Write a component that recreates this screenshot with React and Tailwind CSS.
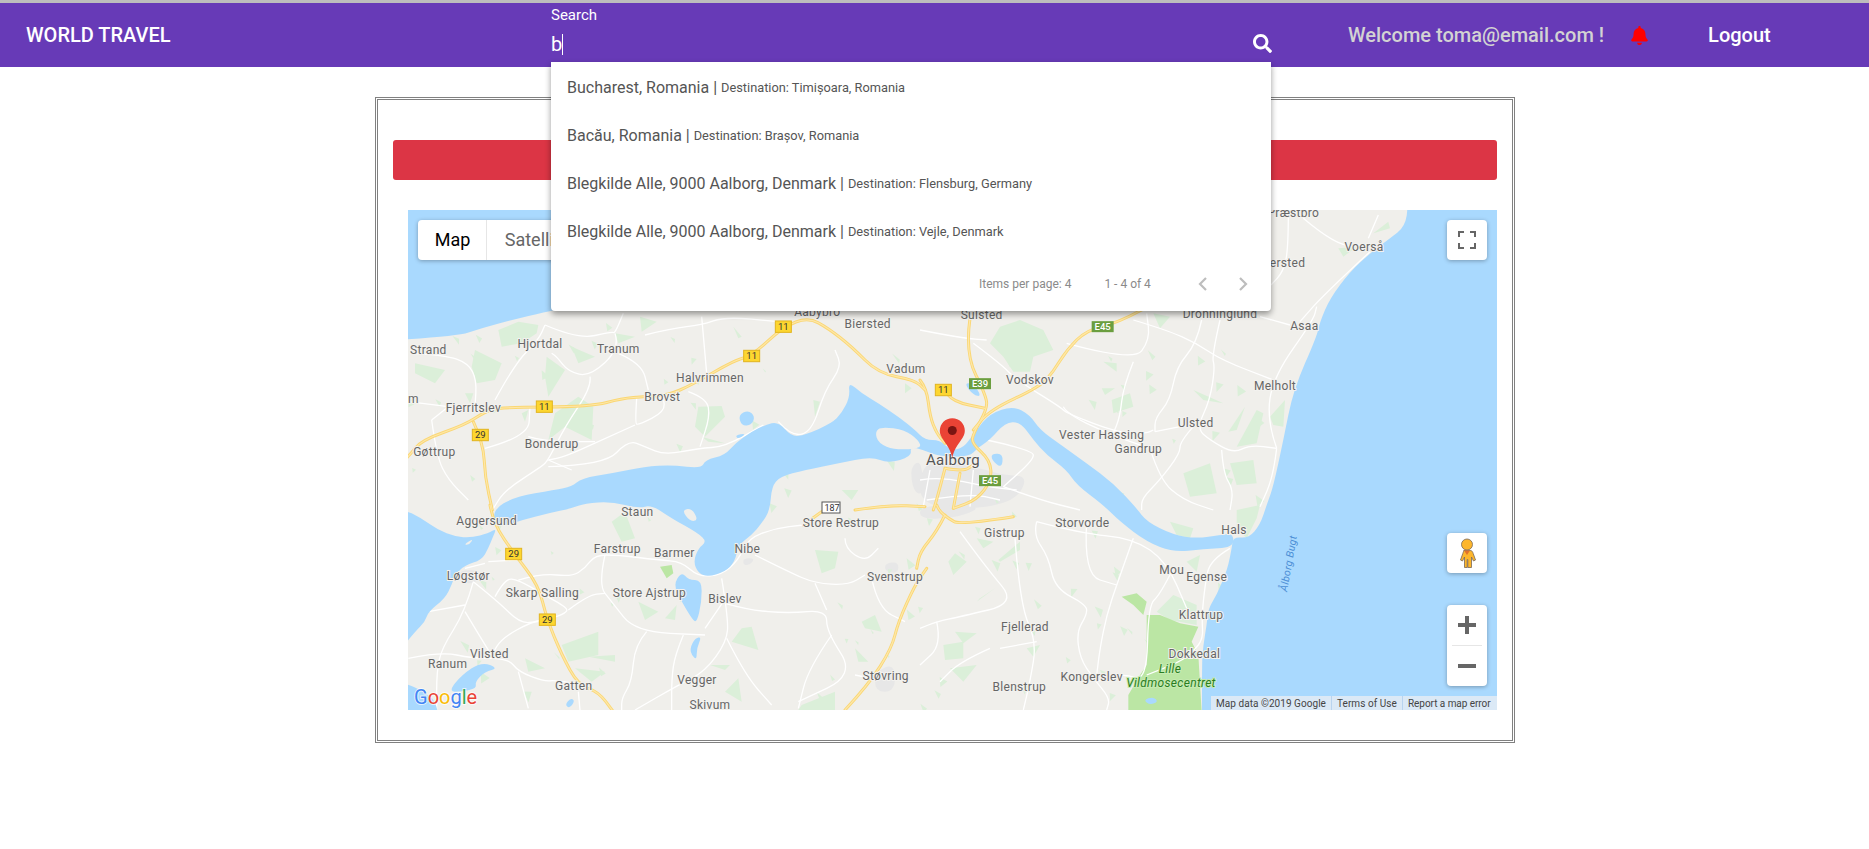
import { FaBell, FaSearch } from 'react-icons/fa';

// zoom crop coords -> page coords, the map svg uses page coords as viewBox
const left = (x, y, top) => [405 + x / 3, top + y / 3];
const right = (x, y, top) => [920 + x / 3, top + y / 3];
const Z6 = (pts) => pts.map(([x, y]) => left(x, y, 300));
const Z7 = (pts) => pts.map(([x, y]) => left(x, y, 505));
const Z8 = (pts) => pts.map(([x, y]) => right(x, y, 300));
const Z9 = (pts) => pts.map(([x, y]) => right(x, y, 505));
const Z10 = (pts) => pts.map(([x, y]) => [1260 + x / 3, 205 + y / 3]);

function curve(pts, closed) {
  if (closed) {
    const mid = (a, b) => [(a[0] + b[0]) / 2, (a[1] + b[1]) / 2];
    const start = mid(pts[pts.length - 1], pts[0]);
    let d = `M${start[0]} ${start[1]}`;
    pts.forEach((p, i) => {
      const m = mid(p, pts[(i + 1) % pts.length]);
      d += `Q${p[0]} ${p[1]} ${m[0]} ${m[1]}`;
    });
    return d + 'Z';
  }
  let d = `M${pts[0][0]} ${pts[0][1]}`;
  for (let i = 1; i < pts.length - 1; i++) {
    const mx = (pts[i][0] + pts[i + 1][0]) / 2;
    const my = (pts[i][1] + pts[i + 1][1]) / 2;
    d += `Q${pts[i][0]} ${pts[i][1]} ${mx} ${my}`;
  }
  const last = pts[pts.length - 1];
  return d + `L${last[0]} ${last[1]}`;
}

const sharp = (pts) => 'M' + pts.map((p) => p.join(' ')).join('L') + 'Z';

const water = [
  [[300, 100], [600, 100], [600, 300], [565, 308], [545, 312], [512, 320], [482, 328], [455, 337], [300, 345]],
  // sea, from Voerså down to the bottom edge
  [...Z10([[445, 0], [435, 65], [390, 100], [330, 145], [270, 200], [210, 280], [180, 350]]),
    ...Z8([[1190, 110], [1120, 270], [1090, 420], [1060, 560]]),
    ...Z9([[1040, 0], [1020, 60], [985, 100], [940, 95], [935, 130], [925, 180], [915, 210], [890, 270], [865, 310], [860, 360], [850, 420], [845, 480], [848, 1000]]),
    [1800, 900], [1800, 50], [1411, 50]],
  // west water at Aggersund
  Z7([[-300, -20], [-10, 10], [50, 40], [100, 75], [150, 95], [200, 98], [250, 85], [275, 70], [262, 100], [250, 130], [230, 165], [180, 180], [150, 210], [140, 240], [120, 280], [70, 320], [60, 350], [30, 380], [-10, 430], [-300, 500]]),
  Z7([[-200, 510], [-10, 530], [60, 560], [100, 600], [100, 700], [-200, 700]]),
  // Limfjord
  [...Z6([[262, 630], [330, 590], [450, 570], [500, 560], [530, 535], [620, 520], [720, 500], [800, 495], [890, 505], [900, 480], [960, 465], [990, 430], [1040, 395], [1080, 375], [1120, 365], [1160, 410], [1200, 405], [1280, 370], [1310, 340], [1335, 290], [1330, 245], [1370, 280], [1420, 310], [1480, 350], [1530, 390], [1560, 420]]),
    ...Z8([[60, 420], [90, 450], [130, 445], [165, 395], [210, 340], [280, 318], [330, 345], [360, 390], [430, 440], [500, 490], [580, 550], [650, 625]]),
    ...Z9([[680, 50], [760, 90], [830, 100], [900, 90], [940, 85], [940, 128], [850, 132], [760, 142], [680, 110], [600, 50], [550, 0]]),
    ...Z8([[470, 555], [440, 510], [380, 465], [340, 420], [300, 365], [255, 368], [210, 420], [170, 445], [150, 470], [60, 470], [10, 450], [-30, 440]]),
    ...Z6([[1520, 470], [1450, 490], [1400, 470], [1300, 490], [1200, 510], [1125, 530], [1100, 560], [1095, 630]]),
    ...Z7([[1070, 55], [1040, 90], [1000, 120], [990, 170], [960, 200], [910, 215], [880, 205], [865, 170], [880, 130], [905, 110], [880, 85], [800, 40], [740, 0]]),
    ...Z6([[700, 625], [620, 605], [540, 610], [500, 625]]),
    ...Z7([[430, 25], [350, 45], [275, 70]])],
  Z6([[1000, 345], [1030, 330], [1050, 350], [1040, 375], [1010, 378]]),
  Z6([[990, 405], [1025, 400], [1000, 418]]),
  Z7([[805, 240], [830, 200], [850, 225], [890, 225], [890, 290], [875, 355], [860, 340], [830, 290]]),
  Z7([[855, 430], [870, 400], [890, 395], [875, 430], [875, 465], [860, 450]]),
  Z7([[130, 560], [170, 510], [230, 470], [280, 490], [240, 500], [210, 530], [215, 550], [170, 560]]),
  Z7([[480, 600], [495, 580], [510, 585], [495, 610]]),
  Z8([[215, 460], [250, 462], [245, 505], [215, 480]]),
  Z8([[132, 250], [160, 250], [185, 290], [160, 285]]),
  Z9([[670, 585], [700, 575], [715, 590], [690, 600]]),
];

const islands = [
  Z6([[1410, 395], [1430, 380], [1500, 390], [1540, 420], [1550, 445], [1470, 450], [1420, 430]]),
  Z7([[830, 15], [860, 10], [880, 45], [855, 50]]),
  Z7([[175, 120], [205, 100], [195, 118]]),
];

const forest = [
  Z6([[280, 90], [340, 65], [400, 75], [395, 100], [350, 130], [290, 140]]),
  Z6([[210, 150], [290, 190], [270, 240], [215, 250], [200, 200]]),
  Z6([[425, 170], [480, 210], [430, 290], [420, 230]]),
  Z6([[430, 420], [450, 340], [520, 290], [565, 320], [560, 420], [480, 380]]),
  Z6([[705, 50], [755, 65], [710, 95]]),
  Z6([[880, 320], [950, 318], [960, 350], [900, 410], [870, 380]]),
  Z6([[890, 410], [960, 430], [910, 425]]),
  Z6([[30, 190], [120, 210], [90, 250], [30, 220]]),
  Z6([[630, 100], [690, 110], [640, 130]]),
  Z6([[1225, 300], [1245, 305], [1230, 350]]),
  Z6([[500, 140], [570, 170], [520, 190]]),
  Z6([[350, 340], [370, 330], [360, 365]]),
  Z6([[1310, 570], [1360, 570], [1340, 600]]),
  Z6([[985, 80], [1010, 110], [1000, 115]]),
  Z6([[180, 280], [205, 280], [195, 310]]),
  Z6([[1500, 250], [1520, 265], [1500, 280]]),
  Z7([[620, 50], [660, 20], [690, 100], [650, 110]]),
  Z7([[470, 420], [580, 380], [580, 450], [490, 470]]),
  Z7([[360, 460], [420, 490], [370, 500]]),
  Z7([[1230, 135], [1300, 140], [1290, 190], [1250, 205]]),
  Z7([[1010, 370], [1040, 365], [1060, 435], [980, 410]]),
  Z7([[1370, 350], [1410, 330], [1430, 380], [1380, 370]]),
  Z7([[1350, 430], [1390, 470], [1360, 470]]),
  Z7([[1190, 600], [1290, 560], [1290, 615], [1180, 615]]),
  Z7([[550, 455], [630, 450], [630, 470]]),
  Z7([[510, 490], [600, 500], [560, 530]]),
  Z7([[700, 290], [760, 320], [720, 345]]),
  Z7([[780, 340], [815, 300], [810, 345]]),
  Z7([[915, 480], [975, 480], [960, 495]]),
  Z7([[960, 560], [1000, 520], [1010, 590]]),
  Z8([[240, 80], [300, 60], [370, 90], [400, 150], [340, 170], [330, 215], [280, 215], [250, 170], [210, 130]]),
  Z8([[550, 185], [590, 190], [590, 215]]),
  Z8([[575, 300], [630, 280], [640, 320], [580, 340]]),
  Z8([[790, 520], [870, 490], [890, 580], [810, 590]]),
  Z8([[930, 490], [1000, 480], [1010, 550], [950, 555]]),
  Z8([[950, 440], [1010, 330], [1030, 340], [1010, 430]]),
  Z8([[925, 395], [975, 320], [950, 390]]),
  Z8([[1050, 350], [1095, 300], [1090, 380], [1060, 375]]),
  Z8([[820, 270], [910, 310], [850, 300]]),
  Z8([[545, 265], [585, 265], [555, 285]]),
  Z8([[700, 40], [750, 50], [720, 85]]),
  Z9([[85, 170], [105, 145], [140, 170], [100, 210]]),
  Z9([[235, 165], [300, 110], [300, 135], [240, 170]]),
  Z9([[170, 100], [220, 110], [190, 130]]),
  Z9([[170, 290], [225, 250], [180, 280]]),
  Z9([[105, 380], [170, 385], [130, 415]]),
  Z9([[70, 420], [130, 410], [130, 460], [75, 465]]),
  Z9([[90, 490], [170, 480], [130, 530]]),
  Z9([[320, 430], [360, 420], [340, 455]]),
  Z9([[750, 50], [820, 70], [810, 100], [770, 90]]),
  Z9([[710, 320], [760, 270], [830, 300], [830, 360], [750, 345]]),
  Z9([[800, 170], [840, 150], [830, 200]]),
  Z9([[950, 15], [1020, 0], [1010, 40], [980, 100], [950, 70]]),
  Z10([[235, 130], [290, 125], [250, 155]]),
  Z10([[340, 85], [385, 50], [390, 70]]),
];

// farmland specks, water is painted over whatever lands in the sea
const specks = [];
let seed = 17;
const rnd = () => (seed = (seed * 16807) % 2147483647) / 2147483647;
for (let i = 0; i < 130; i++) {
  const x = 408 + rnd() * 860;
  const y = 300 + rnd() * 410;
  const s = 3 + rnd() * 6;
  specks.push([[x, y], [x + s, y + s * rnd()], [x + s * rnd(), y + s * 1.3]]);
}

const bright = [
  Z9([[680, 330], [720, 330], [780, 355], [835, 365], [815, 410], [835, 450], [845, 620], [625, 620], [625, 570], [660, 510], [680, 480]]),
  Z9([[605, 275], [650, 265], [680, 290], [670, 330], [640, 300]]),
  Z7([[765, 185], [800, 180], [805, 205], [785, 220]]),
];

const urban = [
  Z8([[0, 500], [70, 480], [200, 510], [250, 525], [330, 530], [270, 620], [0, 630]]),
  Z9([[0, 0], [190, 0], [130, 35], [0, 45]]),
  Z7([[1440, 175], [1480, 170], [1480, 205], [1440, 200]]),
  Z7([[1410, 500], [1470, 475], [1470, 560], [1410, 560]]),
  Z7([[1015, 160], [1050, 160], [1035, 180], [1015, 180]]),
  Z7([[160, 195], [230, 195], [215, 235], [170, 235]]),
  Z6([[1515, 500], [1550, 480], [1555, 585], [1525, 575]]),
];

const roads = [
  Z6([[20, 160], [120, 165], [190, 190], [215, 240], [210, 320]]),
  Z6([[10, 305], [130, 320]]),
  Z6([[270, 300], [330, 190], [400, 120], [420, 75]]),
  Z6([[420, 75], [520, 118], [620, 95], [630, 100], [655, 40]]),
  Z6([[630, 100], [645, 145], [555, 230], [490, 215], [455, 170], [440, 160]]),
  Z6([[555, 230], [560, 260], [480, 380], [430, 480], [410, 500], [300, 570], [262, 630]]),
  Z6([[640, 160], [710, 190], [730, 270]]),
  Z6([[720, 105], [800, 85], [890, 75], [960, 50], [1120, 65]]),
  Z6([[890, 50], [905, 220]]),
  Z6([[850, 275], [905, 295], [915, 350], [885, 440]]),
  Z6([[695, 295], [690, 370], [700, 375], [780, 335], [775, 290]]),
  Z6([[690, 375], [580, 425], [480, 470], [430, 480]]),
  Z6([[430, 480], [500, 510]]),
  Z6([[430, 500], [600, 495], [670, 420], [720, 440], [780, 465], [880, 445], [960, 440], [1075, 375]]),
  Z6([[240, 445], [370, 410], [375, 320]]),
  Z6([[370, 410], [420, 425], [570, 425]]),
  Z6([[1120, 365], [1160, 410], [1220, 395], [1260, 270], [1310, 200], [1290, 150]]),
  Z6([[80, 360], [130, 320]]),
  Z6([[80, 360], [95, 470], [130, 540], [190, 600]]),
  Z7([[250, 170], [340, 165]]),
  Z7([[180, 190], [240, 175]]),
  Z7([[205, 230], [280, 290], [345, 355], [400, 350]]),
  Z7([[340, 225], [410, 205], [500, 215], [540, 190], [570, 150], [640, 150], [760, 165], [830, 170], [880, 215], [950, 210], [1000, 165], [1030, 100], [1110, 70], [1195, 60]]),
  Z7([[600, 150], [580, 240], [620, 290], [690, 380], [900, 390]]),
  Z7([[270, 275], [300, 220], [340, 225], [410, 265], [490, 310], [480, 325], [440, 340], [380, 350], [290, 400], [260, 450]]),
  Z7([[490, 315], [550, 270], [600, 265]]),
  Z7([[205, 230], [180, 320], [110, 430], [95, 500], [95, 615]]),
  Z7([[180, 320], [240, 420], [260, 450]]),
  Z7([[70, 320], [180, 300]]),
  Z7([[10, 460], [110, 440], [200, 460], [310, 460], [340, 500], [420, 530], [450, 525], [560, 545]]),
  Z7([[340, 500], [370, 610]]),
  Z7([[520, 560], [525, 615]]),
  Z7([[725, 380], [690, 420], [680, 530], [650, 580], [650, 615]]),
  Z7([[835, 390], [810, 450], [800, 520], [800, 615]]),
  Z7([[950, 220], [970, 340], [965, 410], [900, 500], [820, 540], [690, 615]]),
  Z7([[900, 370], [955, 290]]),
  Z7([[965, 400], [1020, 510], [1100, 600]]),
  Z7([[960, 295], [1030, 315], [1150, 325], [1265, 315], [1265, 380], [1350, 510], [1180, 590]]),
  Z7([[1280, 390], [1210, 490], [1180, 610]]),
  Z7([[1050, 150], [1150, 200], [1230, 235], [1330, 240], [1380, 210]]),
  Z7([[1230, 235], [1265, 315]]),
  Z7([[1320, 100], [1320, 130], [1380, 170], [1420, 130]]),
  Z7([[1400, 220], [1420, 310], [1500, 350]]),
  Z7([[1350, 510], [1400, 520]]),
  Z8([[160, 130], [240, 190], [290, 240], [420, 320], [440, 340], [600, 400], [680, 400], [700, 390]]),
  Z8([[0, 90], [130, 115], [200, 120]]),
  Z8([[440, 130], [640, 185], [690, 120], [680, 40]]),
  Z8([[640, 185], [610, 260], [600, 350], [580, 400]]),
  Z8([[640, 60], [740, 90], [830, 130], [905, 180], [1060, 240]]),
  Z8([[845, 60], [830, 130], [770, 200], [750, 300], [705, 355], [705, 395]]),
  Z8([[900, 60], [875, 170], [885, 200], [870, 300], [830, 385], [870, 420], [940, 460], [990, 435], [1070, 445]]),
  Z8([[1070, 445], [1040, 360], [1060, 230], [1180, 60], [1190, 20]]),
  Z8([[705, 395], [780, 380]]),
  Z8([[1070, 445], [1060, 530], [1020, 620]]),
  Z8([[905, 450], [910, 520], [940, 570], [930, 630]]),
  Z8([[820, 380], [780, 425], [780, 460], [720, 540], [665, 595], [665, 630]]),
  Z8([[690, 445], [720, 540], [790, 600], [880, 630]]),
  Z8([[430, 320], [440, 340], [560, 400], [690, 445]]),
  Z8([[200, 420], [340, 450], [340, 480], [250, 560]]),
  Z8([[250, 560], [360, 600], [480, 630]]),
  // Aalborg streets
  Z8([[0, 540], [60, 530], [200, 560], [290, 570]]),
  Z8([[20, 600], [150, 580], [240, 600]]),
  Z8([[30, 510], [10, 620]]),
  Z8([[160, 510], [150, 620]]),
  Z9([[500, 50], [490, 210], [590, 240]]),
  Z9([[350, 50], [340, 90], [385, 155], [405, 250], [500, 300], [500, 330], [470, 380], [480, 460], [520, 520], [570, 580], [560, 615]]),
  Z9([[640, 100], [590, 240], [560, 330], [540, 430], [530, 510]]),
  Z9([[350, 50], [480, 85], [640, 100], [740, 170], [800, 310]]),
  Z9([[285, 100], [300, 300], [350, 410], [330, 530], [310, 615]]),
  Z9([[120, 80], [200, 190], [290, 295], [120, 335], [50, 350], [0, 370]]),
  Z9([[50, 350], [65, 420], [0, 480]]),
  Z9([[210, 430], [120, 470], [60, 530]]),
  Z9([[240, 430], [350, 410]]),
  Z9([[760, 190], [720, 270], [685, 300], [680, 530], [610, 505], [530, 530]]),
  Z9([[930, 130], [870, 165], [855, 240], [845, 340], [850, 400], [820, 440], [780, 470], [680, 510]]),
  Z10([[85, 25], [85, 130], [70, 200], [33, 240]]),
  Z10([[130, 40], [230, 125], [320, 120]]),
  Z10([[330, 140], [190, 270], [120, 350]]),
  Z10([[355, 30], [325, 100]]),
  Z10([[0, 335], [90, 360]]),
];

const highways = [
  Z6([[-10, 490], [10, 470], [50, 420], [180, 375], [240, 335], [285, 322], [560, 320], [650, 295], [720, 290], [790, 285], [860, 255], [990, 180], [1040, 168], [1135, 80], [1210, 52], [1270, 85], [1340, 140], [1420, 220], [1530, 240], [1560, 270]]),
  Z6([[205, 365], [235, 430], [240, 530], [262, 630]]),
  Z7([[255, 0], [265, 55], [330, 150], [400, 240], [425, 340], [470, 450], [520, 540], [580, 560], [625, 620]]),
  Z8([[0, 240], [20, 265], [30, 350], [50, 400], [75, 430]]),
  Z8([[150, 55], [135, 160], [200, 290], [200, 330], [160, 400], [155, 430], [210, 480], [215, 540], [170, 600], [100, 625]]),
  Z8([[665, 30], [590, 70], [500, 90], [440, 150], [400, 215], [360, 260], [210, 330], [160, 390]]),
  Z8([[85, 285], [100, 305], [195, 325]]),
  Z8([[75, 505], [50, 600], [40, 630]]),
  Z8([[120, 520], [100, 625]]),
  Z8([[75, 505], [130, 515], [160, 495]]),
  Z9([[280, 35], [120, 60], [85, 40], [60, 20], [50, 0]]),
  Z9([[75, 30], [50, 80], [0, 140], [-10, 190]]),
  Z6([[1350, 630], [1450, 615], [1560, 620]]),
  Z7([[1195, 60], [1250, 20]]),
  Z7([[1320, 615], [1390, 540], [1460, 430], [1480, 350], [1530, 240], [1565, 190]]),
];

const shields = [
  [Z6, 418, 320, '11'], [Z6, 1040, 168, '11'], [Z6, 1135, 80, '11'], [Z8, 70, 270, '11'],
  [Z6, 226, 405, '29'], [Z7, 326, 147, '29'], [Z7, 427, 344, '29'],
];
const greenShields = [[Z8, 180, 251, 'E39'], [Z8, 548, 80, 'E45'], [Z8, 210, 542, 'E45']];

const labels = [
  [Z6, 70, 148, 'Strand'], [Z6, 405, 132, 'Hjortdal'], [Z6, 640, 145, 'Tranum'],
  [Z6, 205, 322, 'Fjerritslev'], [Z6, 915, 232, 'Halvrimmen'], [Z6, 772, 289, 'Brovst'],
  [Z6, 440, 430, 'Bonderup'], [Z6, 88, 454, 'Gøttrup'], [Z6, 1388, 72, 'Biersted'],
  [Z6, 1503, 205, 'Vadum'], [Z6, 1237, 35, 'Aabybro'], [Z6, -30, 295, 'Hjardem'],
  [Z7, 697, 19, 'Staun'], [Z7, 245, 46, 'Aggersund'], [Z7, 637, 130, 'Farstrup'],
  [Z7, 808, 142, 'Barmer'], [Z7, 1027, 132, 'Nibe'], [Z7, 1308, 52, 'Store Restrup'],
  [Z7, 190, 211, 'Løgstør'], [Z7, 412, 262, 'Skarp Salling'], [Z7, 733, 262, 'Store Ajstrup'],
  [Z7, 960, 280, 'Bislev'], [Z7, 1470, 214, 'Svenstrup'], [Z7, 253, 447, 'Vilsted'],
  [Z7, 128, 475, 'Ranum'], [Z7, 506, 541, 'Gatten'], [Z7, 876, 523, 'Vegger'],
  [Z7, 915, 600, 'Skivum'], [Z7, 1442, 511, 'Støvring'],
  [Z8, 185, 43, 'Sulsted'], [Z8, 900, 40, 'Dronninglund'], [Z8, 1153, 78, 'Asaa'],
  [Z8, 1065, 258, 'Melholt'], [Z8, 330, 240, 'Vodskov'], [Z8, 827, 369, 'Ulsted'],
  [Z8, 545, 403, 'Vester Hassing'], [Z8, 655, 445, 'Gandrup'],
  [Z9, 487, 52, 'Storvorde'], [Z9, 253, 82, 'Gistrup'], [Z9, 942, 75, 'Hals'],
  [Z9, 755, 193, 'Mou'], [Z9, 860, 214, 'Egense'], [Z9, 843, 328, 'Klattrup'],
  [Z9, 315, 364, 'Fjellerad'], [Z9, 823, 447, 'Dokkedal'], [Z9, 515, 514, 'Kongerslev'],
  [Z9, 298, 544, 'Blenstrup'],
  [Z10, 100, 22, 'Præstbro'], [Z10, 312, 124, 'Voerså'], [Z10, 60, 172, 'Agersted'],
];

function MapDrawing() {
  const at = (fn, x, y) => fn([[x, y]])[0];
  return (
    <svg viewBox="408 210 1089 500" className="block h-full w-full" fontFamily="Roboto, sans-serif">
      <rect x="408" y="210" width="1089" height="500" fill="#f0efeb" />
      {urban.map((p, i) => <path key={i} d={curve(p, true)} fill="#e7e7e7" />)}
      {forest.map((p, i) => <path key={i} d={sharp(p)} fill="#dbefd9" />)}
      {specks.map((p, i) => <path key={i} d={sharp(p)} fill="#dbefd9" />)}
      {bright.map((p, i) => <path key={i} d={sharp(p)} fill="#bbe6a4" />)}
      {roads.map((p, i) => <path key={i} d={curve(p)} fill="none" stroke="#fff" strokeWidth="1.3" strokeLinejoin="round" />)}
      {water.map((p, i) => <path key={i} d={curve(p, true)} fill="#a9d9fe" />)}
      {islands.map((p, i) => <path key={i} d={curve(p, true)} fill="#f0efeb" />)}
      {highways.map((p, i) => <path key={i} d={curve(p)} fill="none" stroke="#fad774" strokeWidth="3" strokeLinejoin="round" strokeLinecap="round" />)}
      {highways.map((p, i) => <path key={i} d={curve(p)} fill="none" stroke="#fee7a8" strokeWidth="1.2" strokeLinejoin="round" />)}

      {labels.map(([fn, x, y, name]) => {
        const [px, py] = at(fn, x, y);
        return (
          <text key={name} x={px} y={py + 4.2} textAnchor="middle" fontSize="12" letterSpacing="0.3" fill="#666" stroke="#f3f2ef" strokeWidth="2" paintOrder="stroke">
            {name}
          </text>
        );
      })}
      <text x="953" y="465" textAnchor="middle" fontSize="15" letterSpacing="0.3" fill="#555" stroke="#f3f2ef" strokeWidth="2" paintOrder="stroke">Aalborg</text>
      <text x="1170" y="673" textAnchor="middle" fontSize="12" fontStyle="italic" letterSpacing="0.3" fill="#2a7d22" stroke="#c6ebb2" strokeWidth="2" paintOrder="stroke">Lille</text>
      <text x="1171" y="686.5" textAnchor="middle" fontSize="12" fontStyle="italic" letterSpacing="0.3" fill="#2a7d22" stroke="#c6ebb2" strokeWidth="2" paintOrder="stroke">Vildmosecentret</text>
      <text transform="translate(1292 564) rotate(-80)" textAnchor="middle" fontSize="10.5" fontStyle="italic" letterSpacing="0.3" fill="#4d8fd6">Ålborg Bugt</text>

      {shields.map(([fn, x, y, num], i) => {
        const [px, py] = at(fn, x, y);
        return (
          <g key={i}>
            <rect x={px - 8} y={py - 5.7} width="16" height="11.4" fill="#fdd62f" stroke="#e2b420" />
            <text x={px} y={py + 3.4} textAnchor="middle" fontSize="9.5" fill="#333">{num}</text>
          </g>
        );
      })}
      {greenShields.map(([fn, x, y, num], i) => {
        const [px, py] = at(fn, x, y);
        return (
          <g key={i}>
            <rect x={px - 11} y={py - 5.5} width="22" height="11" fill="#6b9e3f" />
            <text x={px} y={py + 3.6} textAnchor="middle" fontSize="9.5" fontWeight="500" fill="#fff">{num}</text>
          </g>
        );
      })}
      <rect x="822" y="502" width="18" height="11" fill="#fff" stroke="#555" />
      <text x="832" y="510.8" textAnchor="middle" fontSize="9" fill="#333">187</text>

      <path d="M952.3 418.2c-7 0-12.5 5.500-12.500 12.400 0 9 9.600 13 12.500 27.400 2.900-14.400 12.500-18.400 12.500-27.400 0-6.900-5.500-12.400-12.500-12.400z" fill="#ea4335" />
      <circle cx="952.300" cy="430.500" r="4.500" fill="#7a1512" />

      <text x="414" y="704" fontSize="20" fill="#4285f4" stroke="#fff" strokeWidth="2" strokeOpacity="0.7" paintOrder="stroke">
        G<tspan fill="#ea4335">o</tspan><tspan fill="#fbbc05">o</tspan><tspan fill="#4285f4">g</tspan><tspan fill="#34a853">l</tspan><tspan fill="#ea4335">e</tspan>
      </text>
    </svg>
  );
}

const results = [
  ['Bucharest, Romania', 'Destination: Timișoara, Romania'],
  ['Bacău, Romania', 'Destination: Brașov, Romania'],
  ['Blegkilde Alle, 9000 Aalborg, Denmark', 'Destination: Flensburg, Germany'],
  ['Blegkilde Alle, 9000 Aalborg, Denmark', 'Destination: Vejle, Denmark'],
];

function MapControls() {
  return (
    <>
      <div className="absolute left-[10px] top-[10px] flex h-10 rounded-sm bg-white text-[18px] leading-10 shadow-[0_1px_4px_rgba(0,0,0,0.3)]">
        <div className="w-[69px] border-r border-[#e6e6e6] pl-px text-center text-black">Map</div>
        <div className="w-[100px] text-center text-[#666]">Satellite</div>
      </div>

      <div className="absolute right-[10px] top-[10px] flex h-10 w-10 items-center justify-center rounded-sm bg-white shadow-[0_1px_4px_rgba(0,0,0,0.3)]">
        <svg width="18" height="18" viewBox="0 0 18 18" fill="none" stroke="#666" strokeWidth="2">
          <path d="M1 6V1h5M12 1h5v5M17 12v5h-5M6 17H1v-5" />
        </svg>
      </div>

      <div className="absolute right-[10px] top-[323px] flex h-10 w-10 items-center justify-center rounded-sm bg-white shadow-[0_1px_4px_rgba(0,0,0,0.3)]">
        <svg width="18" height="30" viewBox="0 0 18 30">
          <path d="M6 12.500h6c2 0 2.600 1.200 3.200 3l2.300 6.500-2 1-2-4v10.500H9.800v-8h-.6v8H6.500V19l-2 4-2-1 2.300-6.500c.6-1.800 1.200-3 1.200-3.500z" fill="#fdb62c" stroke="#77685a" strokeWidth="0.8" />
          <circle cx="9" cy="6.500" r="5.500" fill="#fdb62c" stroke="#77685a" strokeWidth="0.8" />
          <path d="M6 12.500h6l-3 4.500z" fill="#e2702b" />
        </svg>
      </div>

      <div className="absolute right-[10px] top-[395px] flex h-[81px] w-10 flex-col items-center rounded-sm bg-white shadow-[0_1px_4px_rgba(0,0,0,0.3)]">
        <div className="flex h-10 items-center justify-center">
          <svg width="18" height="18" viewBox="0 0 18 18"><path d="M7 0h4v7h7v4h-7v7H7v-7H0V7h7z" fill="#666" /></svg>
        </div>
        <div className="h-px w-[30px] bg-[#e6e6e6]" />
        <div className="flex h-10 items-center justify-center">
          <svg width="18" height="4" viewBox="0 0 18 4"><rect width="18" height="4" fill="#666" /></svg>
        </div>
      </div>

      <div className="absolute bottom-0 right-0 flex h-[14px] w-[286px] items-center whitespace-nowrap bg-[#dbe9f6] text-[10px] text-[#444]">
        <span className="w-[121px] border-r border-[#b9d4ef] pl-[5px] tracking-[0.05px]">Map data ©2019 Google</span>
        <span className="w-[71px] border-r border-[#b9d4ef] pl-[5px] tracking-[0.05px]">Terms of Use</span>
        <span className="pl-[5px] tracking-[-0.05px]">Report a map error</span>
      </div>
    </>
  );
}

export default function App() {
  return (
    <div className="min-h-screen bg-white font-['Roboto',sans-serif]">
      <div className="h-[3px] bg-[#bdbdbd]" />

      <header className="relative z-10 flex h-16 items-center bg-[#673ab7] text-white">
        <div className="w-[551px] pl-[26px] text-[20px] font-medium">WORLD TRAVEL</div>

        <div className="relative h-full w-[721px]">
          <div className="pt-px text-[15px] leading-[22px]">Search</div>
          <div className="mt-[6px] flex h-6 items-center text-[20px] leading-6">
            b<span className="h-[21px] w-px bg-white" />
          </div>
          <FaSearch className="absolute right-0 top-[31px] text-[19px]" />

          <div className="absolute left-0 top-[59px] w-[720px] rounded-b bg-white shadow-[0_3px_6px_rgba(0,0,0,0.4)]">
            {results.map(([name, dest], i) => (
              <div key={i} className="flex h-12 items-center px-4 pt-[3px] text-[16px] text-[#555]">
                <span>{name} |&nbsp;</span>
                <span className="text-[12.8px]">{dest}</span>
              </div>
            ))}
            <div className="flex h-[57px] items-center pl-[428px] pt-[2px] text-[12px] text-[#8a8a8a]">
              <span>Items per page: 4</span>
              <span className="ml-[33px]">1 - 4 of 4</span>
              <svg className="ml-[46px]" width="12" height="16" viewBox="0 0 12 16" fill="none" stroke="#bdbdbd" strokeWidth="2.200">
                <path d="M9 2 3 8l6 6" />
              </svg>
              <svg className="ml-[28px]" width="12" height="16" viewBox="0 0 12 16" fill="none" stroke="#bdbdbd" strokeWidth="2.200">
                <path d="m3 2 6 6-6 6" />
              </svg>
            </div>
          </div>
        </div>

        <div className="ml-[76px] text-[20px] font-medium text-[#d3d3d3]">Welcome toma@email.com !</div>
        <FaBell className="ml-[26px] text-[19px] text-[#ff0000]" />
        <div className="ml-[59px] text-[20px] font-medium">Logout</div>
      </header>

      <main className="ml-[375px] mt-[30px] h-[646px] w-[1140px] border-[3px] border-double border-[#808080] px-[15px] pt-10">
        <div className="h-10 rounded-[3px] bg-[#dc3545]" />
        <div className="relative ml-[15px] mt-[30px] h-[500px] w-[1089px] overflow-hidden">
          <MapDrawing />
          <MapControls />
        </div>
      </main>
    </div>
  );
}
